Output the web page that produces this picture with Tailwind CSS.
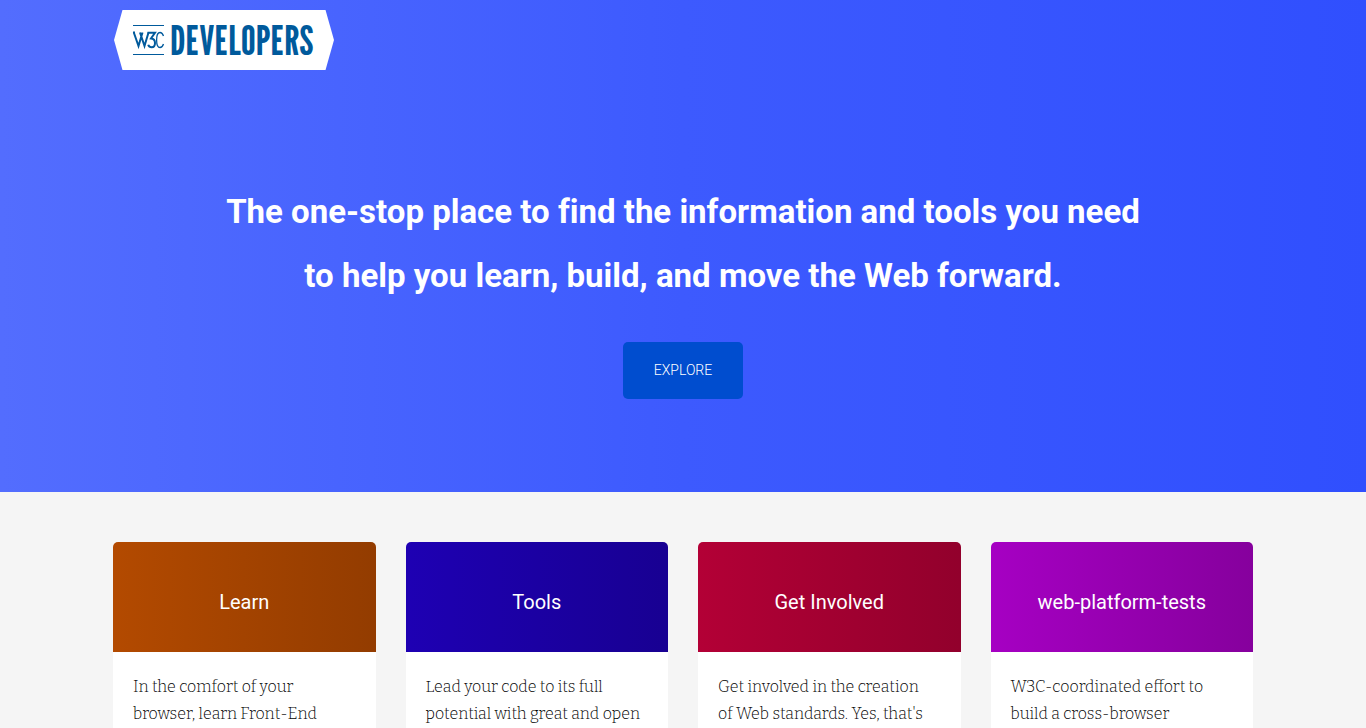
<!DOCTYPE html>
<html lang="en">
<head>
    <meta charset="UTF-8">
    <meta name="viewport" content="width=device-width, initial-scale=1.0">
    <title>W3C Developers</title>
    <script src="https://cdn.jsdelivr.net/npm/@tailwindcss/browser@4"></script>
</head>
<body class="min-h-screen bg-[#f5f5f5] font-['Roboto',sans-serif]">
    <!-- Hero -->
    <header class="bg-linear-to-r from-[#536dfe] via-[#3d5afe] to-[#304ffe] pt-2.5 pb-[93px] text-white">
        <div class="mx-auto max-w-[1140px] px-px">
            <a href="#" class="inline-block align-top" aria-label="W3C Developers">
                <svg class="block h-[60px] w-[220px]" viewBox="0 0 220 60">
                    <path d="M8.500 0H211.500L220 30L211.500 60H8.500L0 30Z" fill="#fff"/>
                    <path d="M19 15.500H50M19 44.500H50" stroke="#005a9c" stroke-width="1"/>
                    <!-- W3C mark -->
                    <g fill="none" stroke="#005a9c">
                        <path d="M19 22.500H21M19.800 22.500L24.500 36L28.500 22.500M26 22.500L30.500 36L34.500 22.500" stroke-width="2"/>
                        <path d="M33.500 22.700H41L37 28.500C40 28.800 41 30.600 41 33C41 36 39.800 37.300 37.700 37.300C35.800 37.300 34.700 36.300 34.200 34.800" stroke-width="2"/>
                        <path d="M49.500 26C48.600 23.500 47.500 22.500 46 22.500C43.600 22.500 42.600 25.500 42.600 30C42.600 34.500 43.600 37.500 46 37.500C47.600 37.500 48.700 36.300 49.500 34" stroke-width="1.300"/>
                    </g>
                    <text x="56" y="45" font-family="'League Gothic', 'Liberation Sans Narrow', sans-serif" font-size="42" fill="#005a9c">DEVELOPERS</text>
                </svg>
            </a>
        </div>
        <div class="mx-auto mt-[110px] max-w-[1140px] px-4 text-center">
            <h1 class="mx-auto max-w-[940px] text-[33px] leading-[64px] font-bold [font-variant-ligatures:none]">The one-stop place to find the information and tools you need to help you learn, build, and move the Web forward.</h1>
            <a href="#explore" class="mt-[34px] inline-block rounded-[5px] bg-[#004dcf] px-[31px] py-[18px] align-top text-sm leading-[21px] font-light">EXPLORE</a>
        </div>
    </header>

    <!-- Cards -->
    <main id="explore" class="mx-auto grid max-w-[1140px] grid-cols-4 gap-[30px] py-[50px]">
        <section class="overflow-hidden rounded-[5px] bg-white">
            <h2 class="bg-linear-to-r from-[#b34a00] to-[#933c00] pt-[45px] pb-[35px] text-center text-[20px] leading-[30px] text-white">Learn</h2>
            <p class="px-5 pt-[21px] pb-5 font-['Roboto_Slab','Bitter','Liberation_Serif',serif] text-base leading-[27px] font-light text-black">In the comfort of your browser, learn Front-End</p>
        </section>
        <section class="overflow-hidden rounded-[5px] bg-white">
            <h2 class="bg-linear-to-r from-[#1e00b3] to-[#180092] pt-[45px] pb-[35px] text-center text-[20px] leading-[30px] text-white">Tools</h2>
            <p class="px-5 pt-[21px] pb-5 font-['Roboto_Slab','Bitter','Liberation_Serif',serif] text-base leading-[27px] font-light text-black">Lead your code to its full potential with great and open</p>
        </section>
        <section class="overflow-hidden rounded-[5px] bg-white">
            <h2 class="bg-linear-to-r from-[#b30036] to-[#92002c] pt-[45px] pb-[35px] text-center text-[20px] leading-[30px] text-white">Get Involved</h2>
            <p class="px-5 pt-[21px] pb-5 font-['Roboto_Slab','Bitter','Liberation_Serif',serif] text-base leading-[27px] font-light text-black">Get involved in the creation of&nbsp;Web standards. Yes, that's</p>
        </section>
        <section class="overflow-hidden rounded-[5px] bg-white">
            <h2 class="bg-linear-to-r from-[#a600c3] to-[#86009d] pt-[45px] pb-[35px] text-center text-[20px] leading-[30px] text-white">web-platform-tests</h2>
            <p class="px-5 pt-[21px] pb-5 font-['Roboto_Slab','Bitter','Liberation_Serif',serif] text-base leading-[27px] font-light text-black">W3C-coordinated effort to build a cross-browser</p>
        </section>
    </main>
</body>
</html>
